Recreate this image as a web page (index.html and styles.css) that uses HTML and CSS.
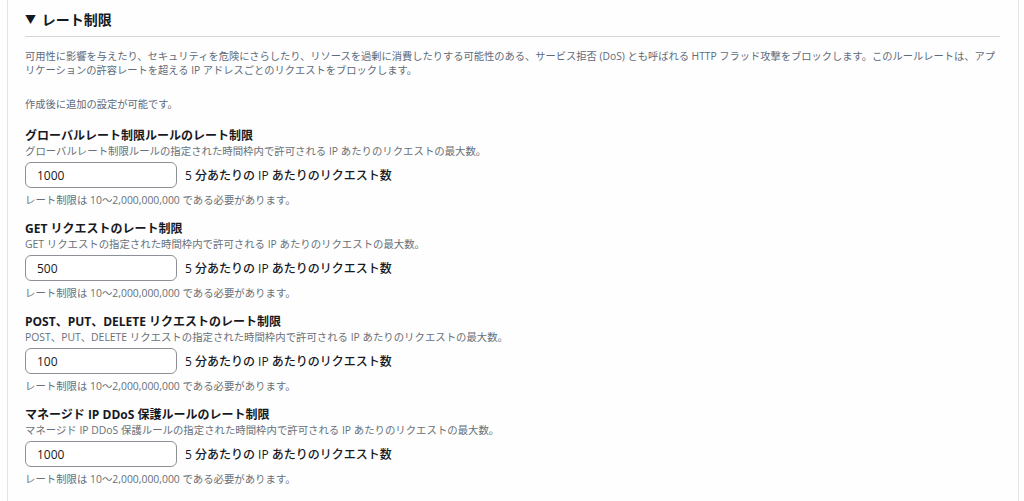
FILE: index.html
```html
<!DOCTYPE html>
<html lang="ja">
<head>
    <meta charset="UTF-8">
    <meta name="viewport" content="width=device-width, initial-scale=1.0">
    <title>レート制限</title>
    <link rel="stylesheet" href="styles.css">
</head>
<body>
    <div class="panel">
        <h2 class="section-title"><span class="caret">▼</span> レート制限</h2>
        <p class="intro">可用性に影響を与えたり、セキュリティを危険にさらしたり、リソースを過剰に消費したりする可能性のある、サービス拒否 (DoS) とも呼ばれる HTTP フラッド攻撃をブロックします。このルールレートは、アプリケーションの許容レートを超える IP アドレスごとのリクエストをブロックします。</p>
        <p class="intro note">作成後に追加の設定が可能です。</p>

        <div class="field">
            <label class="field-label" for="global">グローバルレート制限ルールのレート制限</label>
            <div class="field-desc">グローバルレート制限ルールの指定された時間枠内で許可される IP あたりのリクエストの最大数。</div>
            <div class="field-row">
                <input type="text" id="global" value="1000">
                <span class="unit">5 分あたりの IP あたりのリクエスト数</span>
            </div>
            <div class="field-hint">レート制限は 10〜2,000,000,000 である必要があります。</div>
        </div>

        <div class="field">
            <label class="field-label" for="get">GET リクエストのレート制限</label>
            <div class="field-desc">GET リクエストの指定された時間枠内で許可される IP あたりのリクエストの最大数。</div>
            <div class="field-row">
                <input type="text" id="get" value="500">
                <span class="unit">5 分あたりの IP あたりのリクエスト数</span>
            </div>
            <div class="field-hint">レート制限は 10〜2,000,000,000 である必要があります。</div>
        </div>

        <div class="field">
            <label class="field-label" for="post">POST、PUT、DELETE リクエストのレート制限</label>
            <div class="field-desc">POST、PUT、DELETE リクエストの指定された時間枠内で許可される IP あたりのリクエストの最大数。</div>
            <div class="field-row">
                <input type="text" id="post" value="100">
                <span class="unit">5 分あたりの IP あたりのリクエスト数</span>
            </div>
            <div class="field-hint">レート制限は 10〜2,000,000,000 である必要があります。</div>
        </div>

        <div class="field">
            <label class="field-label" for="ddos">マネージド IP DDoS 保護ルールのレート制限</label>
            <div class="field-desc">マネージド IP DDoS 保護ルールの指定された時間枠内で許可される IP あたりのリクエストの最大数。</div>
            <div class="field-row">
                <input type="text" id="ddos" value="1000">
                <span class="unit">5 分あたりの IP あたりのリクエスト数</span>
            </div>
            <div class="field-hint">レート制限は 10〜2,000,000,000 である必要があります。</div>
        </div>
    </div>
</body>
</html>
```

FILE: styles.css
```css
body {
    font-family: "Open Sans", "Noto Sans CJK JP", sans-serif;
    margin: 0;
    padding: 0;
    background-color: #fff;
    color: #16191f;
}

.panel {
    margin: 0 5px 0 7px;
    min-height: 501px;
    box-sizing: border-box;
    border-left: 1px solid #e4e4e8;
    border-right: 1px solid #e4e4e8;
    background-color: #fefefe;
    padding: 10px 18px 0 17px;
}

.section-title {
    font-size: 14px;
    font-weight: bold;
    margin: 0;
    padding-bottom: 6px;
    border-bottom: 1px solid #d5d5d5;
    line-height: 20px;
}

.caret {
    font-size: 11px;
    vertical-align: 1px;
    margin-right: 2px;
}

.intro {
    font-size: 10.25px;
    line-height: 14px;
    color: #5f6b7a;
    margin: 12px -4px 0 0;
}

.intro.note {
    margin-top: 20px;
}

.field {
    margin-top: 17px;
}

.field + .field {
    margin-top: 14px;
}

.field-label {
    display: block;
    font-size: 12px;
    font-weight: bold;
    line-height: 16px;
}

.field-desc, .field-hint {
    font-size: 10.4px;
    line-height: 14px;
    color: #687078;
}

.field-row {
    display: flex;
    align-items: center;
    gap: 8px;
    margin: 4px 0 5px;
}

.field-row input {
    width: 152px;
    height: 26px;
    box-sizing: border-box;
    border: 1px solid #8d9096;
    border-radius: 6px;
    padding: 0 11px;
    font-family: inherit;
    font-size: 12px;
    color: #16191f;
    background: #fff;
}

.unit {
    font-size: 12px;
    font-weight: 500;
    color: #16191f;
}
```
